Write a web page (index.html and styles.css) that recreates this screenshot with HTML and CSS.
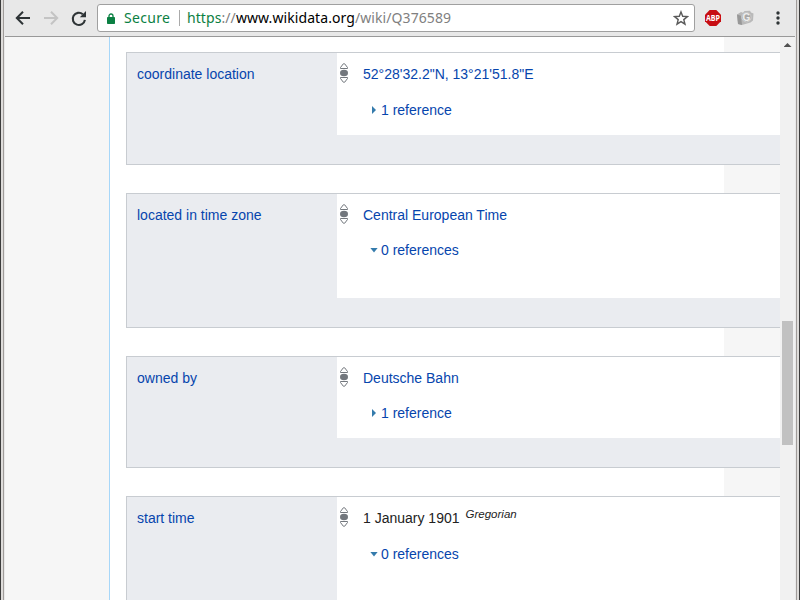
FILE: index.html
```html
<!DOCTYPE html>
<html lang="en">
<head>
<meta charset="utf-8">
<title>Wikidata</title>
<link rel="stylesheet" href="styles.css">
</head>
<body>
<svg class="defs" width="0" height="0">
  <symbol id="rank" viewBox="0 0 8 20">
    <path d="M.5 5.500V4.500L3.300 .8h1.400l2.800 3.700v1z" fill="#fff" stroke="#72777d" stroke-width="1"/>
    <ellipse cx="4" cy="10" rx="4" ry="3.200" fill="#72777d"/>
    <path d="M.5 14.500v1l2.800 3.700h1.400l2.800-3.700v-1z" fill="#fff" stroke="#72777d" stroke-width="1"/>
  </symbol>
</svg>
<div class="window">
  <div class="frame">
    <header class="toolbar">
      <svg class="nav" width="92" height="36" viewBox="0 0 92 36" fill="none" stroke-width="2">
        <path d="M26 18H13.500M19 11.800L12.800 18l6.200 6.200" stroke="#2e3436"/>
        <path d="M40 18h12.500M47 11.800L53.200 18 47 24.200" stroke="#c4c4c4"/>
        <path d="M78.800 14.200A6.100 6.100 0 1 0 80.900 19.800" stroke="#2e3436" stroke-width="2.100"/>
        <path d="M82 11v6.200h-6.200z" fill="#2e3436"/>
      </svg>
      <div class="address">
        <svg class="lock" width="8" height="11" viewBox="0 0 8 11"><path d="M2 4.500V3a2 2 0 0 1 4 0v1.500" fill="none" stroke="#0b8043" stroke-width="1.300"/><rect y="4" width="8" height="7" rx=".8" fill="#0b8043"/></svg>
        <span class="secure">Secure</span>
        <span class="divider"></span>
        <span class="url"><span class="scheme">https</span>://<b>www.wikidata.org</b>/wiki/Q376589</span>
        <svg class="star" width="16" height="16" viewBox="0 0 16 16"><path d="M8 1.900l1.700 4.400 4.700.3-3.600 3 1.200 4.600L8 11.700l-4 2.500 1.200-4.600-3.600-3 4.700-.3z" fill="none" stroke="#5a5a5a" stroke-width="1.400"/></svg>
      </div>
      <svg class="abp" width="16" height="16" viewBox="0 0 16 16"><path d="M4.700 0h6.600L16 4.700v6.600L11.300 16H4.700L0 11.300V4.700z" fill="#c70d12"/><text x="8" y="11" text-anchor="middle" textLength="14" lengthAdjust="spacingAndGlyphs">ABP</text></svg>
      <svg class="cam" width="17" height="16" viewBox="0 0 17 16"><path d="M0 4.500L4 2l2 .8L7.500 1 13 .8l1 1.700 2.500 1-.5 7-2.500 2L5 15l-4-1z" fill="#b9b9b9"/><path d="M0 4.500l4 1.300L5 15l-4-1z" fill="#989898"/><circle cx="9.500" cy="7.300" r="4.600" fill="#a8a8a8" stroke="#d0d0d0"/><text x="9.500" y="10.800" text-anchor="middle">G</text></svg>
      <svg class="more" width="4" height="14" viewBox="0 0 4 14" fill="#2e3436"><circle cx="2" cy="2" r="1.700"/><circle cx="2" cy="7" r="1.700"/><circle cx="2" cy="12" r="1.700"/></svg>
    </header>
    <div class="viewport">
      <main class="content">
        <section class="group located">
          <div class="property">coordinate location</div>
          <div class="statement">
            <svg class="rank"><use href="#rank"/></svg>
            <div class="value">52°28'32.2"N, 13°21'51.8"E</div>
            <div class="refs closed low">1 reference</div>
          </div>
        </section>
        <section class="group zone">
          <div class="property">located in time zone</div>
          <div class="statement">
            <svg class="rank"><use href="#rank"/></svg>
            <div class="value">Central European Time</div>
            <div class="refs open">0 references</div>
          </div>
        </section>
        <section class="group owner">
          <div class="property">owned by</div>
          <div class="statement">
            <svg class="rank"><use href="#rank"/></svg>
            <div class="value">Deutsche Bahn</div>
            <div class="refs closed">1 reference</div>
          </div>
        </section>
        <section class="group start">
          <div class="property">start time</div>
          <div class="statement">
            <svg class="rank"><use href="#rank"/></svg>
            <div class="value plain">1 January 1901<i>Gregorian</i></div>
            <div class="refs open low">0 references</div>
          </div>
        </section>
      </main>
      <aside class="scrollbar"><span class="arrow"></span><span class="thumb"></span></aside>
    </div>
  </div>
</div>
</body>
</html>
```

FILE: styles.css
```css
* { box-sizing: border-box; }
body { margin: 0; background: #e8e8e8; }
.defs { position: absolute; }
.window {
  width: 800px;
  height: 600px;
  padding: 0 2px;
  border-left: 1px solid #3c3c3c;
  border-right: 1px solid #3c3c3c;
  background: #dedcda;
}
.frame {
  height: 600px;
  display: flex;
  flex-direction: column;
  padding: 0 1px;
  border-left: 1px solid #a09c9a;
  border-right: 1px solid #a09c9a;
  background: #e8e8e8;
}
.toolbar {
  height: 37px;
  flex: none;
  display: flex;
  align-items: center;
  border-bottom: 1px solid #999;
}
.nav { flex: none; margin-left: -1px; margin-right: 1px; }
.address {
  width: 598px;
  height: 28px;
  flex: none;
  display: flex;
  align-items: center;
  padding-left: 9px;
  border: 1px solid #a0a0a0;
  border-radius: 3px;
  background: #fff;
  font: 14px/26px "Noto Sans", sans-serif;
}
.lock { margin-right: 9px; }
.secure { width: 46px; color: #0b8043; letter-spacing: .3px; white-space: nowrap; }
.divider { width: 1px; height: 16px; margin: 0 7px 0 9px; background: #aaa; }
.url { color: #808080; letter-spacing: .08px; white-space: nowrap; }
.url b { font-weight: 400; color: #000; }
.scheme { color: #0b8043; }
.star { margin-left: auto; margin-right: 5px; }
.abp { margin-left: 10px; }
.abp text { font: bold 8px "Open Sans", sans-serif; fill: #fff; }
.cam { margin-left: 16px; }
.cam text { font: bold 10px "Liberation Sans", sans-serif; fill: #eee; }
.more { margin-left: 22px; }
.viewport {
  height: 563px;
  display: flex;
  overflow: hidden;
  background: #f6f6f6;
}
.content {
  width: 615px;
  height: 563px;
  flex: none;
  margin-left: 104px;
  padding: 15px 0 0 16px;
  border-left: 1px solid #a7d7f9;
  background: #fff;
  font: 14px/20px "Liberation Sans", Arial, sans-serif;
  color: #0645ad;
}
.group {
  display: flex;
  width: 654px;
  margin-bottom: 28px;
  padding-bottom: 29px;
  border: 1px solid #c8ccd1;
  border-right: 0;
  background: #eaecf0;
}
.located { height: 113px; }
.zone { height: 135px; }
.owner { height: 112px; }
.start { height: 104px; margin-bottom: 0; padding-bottom: 0; border-bottom: 0; }
.property { width: 210px; flex: none; padding: 11px 0 0 10px; }
.statement { position: relative; flex: 1; padding: 11px 0 0 26px; background: #fff; }
.rank { position: absolute; left: 3px; top: 10px; width: 8px; height: 20px; }
.value { height: 20px; white-space: nowrap; }
.plain { color: #222; }
.plain i { position: relative; top: -5px; margin-left: 6px; font-size: 11.500px; }
.refs { display: flex; align-items: center; width: 120px; height: 20px; margin: 15px 0 0 18px; }
.low { margin-top: 16px; }
.refs::before { content: ""; flex: none; background: #347bac; }
.closed::before { width: 4px; height: 8px; margin: 0 5px 0 -9px; clip-path: polygon(0 0, 100% 50%, 0 100%); }
.open::before { width: 8px; height: 5px; margin: 0 3px 0 -11px; clip-path: polygon(0 0, 100% 0, 50% 100%); }
.scrollbar {
  width: 15px;
  flex: none;
  margin-left: auto;
  background: #f1f1f1;
}
.arrow { display: block; width: 8px; height: 4px; margin: 6px auto 0; background: #505050; clip-path: polygon(50% 0, 100% 100%, 0 100%); }
.thumb { display: block; width: 11px; height: 124px; margin: 274px 0 0 2px; background: #c1c1c1; }
```
